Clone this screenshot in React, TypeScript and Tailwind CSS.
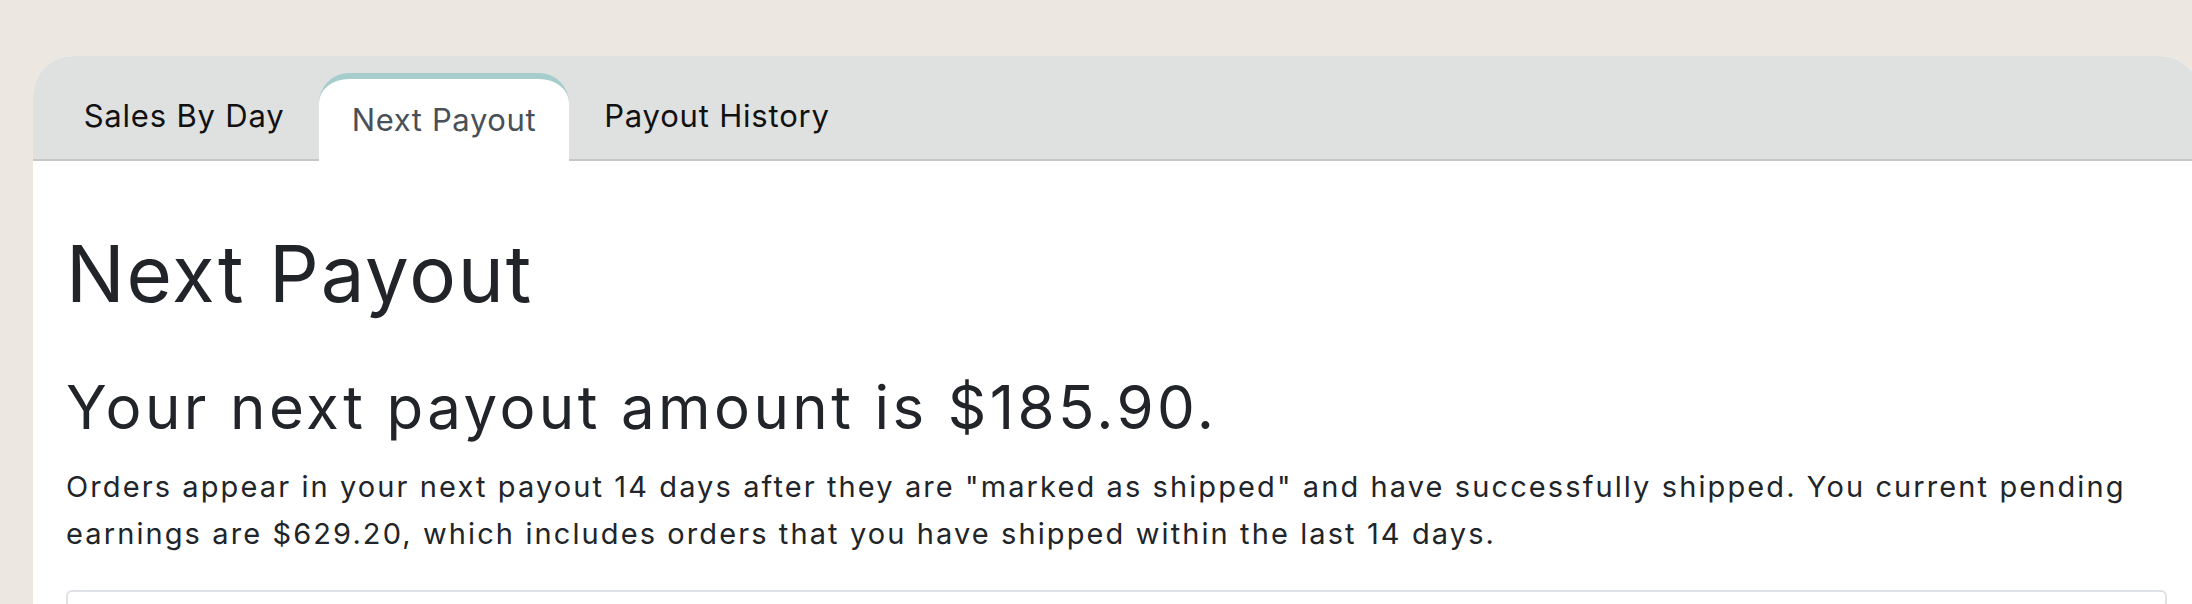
const TABS = [
  { label: "Sales By Day", width: "w-[270px]", active: false },
  { label: "Next Payout", width: "w-[250px]", active: true },
  { label: "Payout History", width: "w-[296px]", active: false },
];

function Tab({ label, width, active }: { label: string; width: string; active: boolean }) {
  if (active) {
    return (
      <div
        className={[
          width,
          "mt-[17px] -mb-[2px] flex justify-center rounded-t-[30px] border-t-[6px] border-[#a6cdcc] bg-white pt-[25px] text-[31px] tracking-[0.6px] text-[#495057]",
        ].join(" ")}
      >
        {label}
      </div>
    );
  }
  return (
    <div
      className={[
        width,
        "flex justify-center pt-[44px] text-[31px] tracking-[0.8px] text-[#111111]",
      ].join(" ")}
    >
      {label}
    </div>
  );
}

export default function App() {
  return (
    <div
      className="min-h-screen overflow-hidden bg-[#ece7e0] pt-[56px]"
      style={{ fontFamily: "Inter, 'Noto Sans', sans-serif" }}
    >
      <div className="ml-[33px] w-[2167px] overflow-hidden rounded-t-[40px] bg-white">
        {/* Tabs */}
        <div className="flex h-[105px] border-b-2 border-[#c6c6c6] bg-[#dfe1e0] pl-[16px] leading-none">
          {TABS.map((t) => (
            <Tab key={t.label} {...t} />
          ))}
        </div>

        {/* Content */}
        <div className="px-[33px] pt-[74px] text-[#212529]">
          <h1 className="text-[78px] leading-none tracking-[1.8px]">Next Payout</h1>
          <h2 className="mt-[64px] text-[60px] leading-none tracking-[3.4px]">
            Your next payout amount is $185.90.
          </h2>
          <p className="mt-[26px] max-w-[2070px] text-[29px] leading-[47px] tracking-[2.1px]">
            Orders appear in your next payout 14 days after they are "marked as shipped" and have
            successfully shipped. You current pending earnings are $629.20, which includes orders
            that you have shipped within the last 14 days.
          </p>
          <div className="mt-[33px] h-[60px] rounded-[6px] border-2 border-[#dee2e6]" />
        </div>
      </div>
    </div>
  );
}
